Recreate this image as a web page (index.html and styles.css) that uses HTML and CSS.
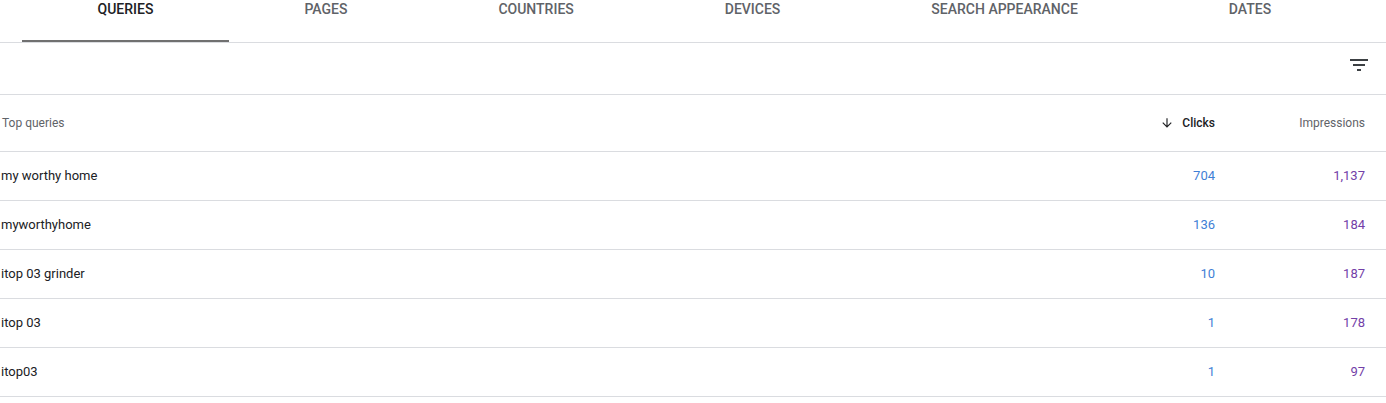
FILE: index.html
```html
<!DOCTYPE html>
<html>
<head>
<meta charset="utf-8">
<link rel="stylesheet" href="styles.css">
</head>
<body>
<div class="tabs">
  <div class="tab active">Queries</div>
  <div class="tab">Pages</div>
  <div class="tab">Countries</div>
  <div class="tab">Devices</div>
  <div class="tab">Search appearance</div>
  <div class="tab">Dates</div>
</div>
<div class="toolbar">
  <svg class="filter" width="24" height="24" viewBox="0 0 24 24"><path d="M10 18h4v-2h-4v2zM3 6v2h18V6H3zm3 7h12v-2H6v2z" fill="#3c4043"/></svg>
</div>
<div class="table">
  <div class="row head">
    <div class="cell name">Top queries</div>
    <div class="cell num sorted"><svg width="14" height="14" viewBox="0 0 24 24"><path d="M20 12l-1.41-1.41L13 16.17V4h-2v12.17l-5.58-5.59L4 12l8 8 8-8z" fill="#202124"/></svg>Clicks</div>
    <div class="cell num">Impressions</div>
  </div>
  <div class="row"><div class="cell name">my worthy home</div><div class="cell num clicks">704</div><div class="cell num impr">1,137</div></div>
  <div class="row"><div class="cell name">myworthyhome</div><div class="cell num clicks">136</div><div class="cell num impr">184</div></div>
  <div class="row"><div class="cell name">itop 03 grinder</div><div class="cell num clicks">10</div><div class="cell num impr">187</div></div>
  <div class="row"><div class="cell name">itop 03</div><div class="cell num clicks">1</div><div class="cell num impr">178</div></div>
  <div class="row"><div class="cell name">itop03</div><div class="cell num clicks">1</div><div class="cell num impr">97</div></div>
</div>
</body>
</html>
```
FILE: styles.css
```css
* { box-sizing: border-box; }
body {
  margin: 0;
  font-family: Roboto, "Liberation Sans", Arial, sans-serif;
  color: #202124;
  background: #fff;
}
.tabs {
  display: flex;
  padding-left: 22px;
  border-bottom: 1px solid #dadce0;
}
.tab {
  height: 42px;
  padding: 0 75.5px;
  line-height: 19px;
  font-size: 14px;
  font-weight: 500;
  text-transform: uppercase;
  color: #5f6368;
  white-space: nowrap;
  border-bottom: 2px solid transparent;
}
.tab.active {
  color: #202124;
  border-bottom-color: #707070;
}
.toolbar {
  height: 52px;
  display: flex;
  justify-content: flex-end;
  align-items: flex-start;
  padding: 10px 15px 0 0;
  border-bottom: 1px solid #dadce0;
}
.row {
  display: grid;
  grid-template-columns: 1fr 150px 150px;
  align-items: center;
  height: 49px;
  padding: 0 21px 2px 1px;
  border-bottom: 1px solid #dadce0;
  font-size: 13px;
}
.row.head {
  height: 57px;
  font-size: 12px;
  color: #5f6368;
  padding: 0 21px 0 2px;
}
.num { text-align: right; }
.sorted {
  color: #202124;
  font-weight: 500;
  display: flex;
  justify-content: flex-end;
  align-items: center;
  gap: 8px;
}
.sorted svg { display: block; }
.clicks { color: #3f7fd6; }
.impr { color: #7340a8; }
```
